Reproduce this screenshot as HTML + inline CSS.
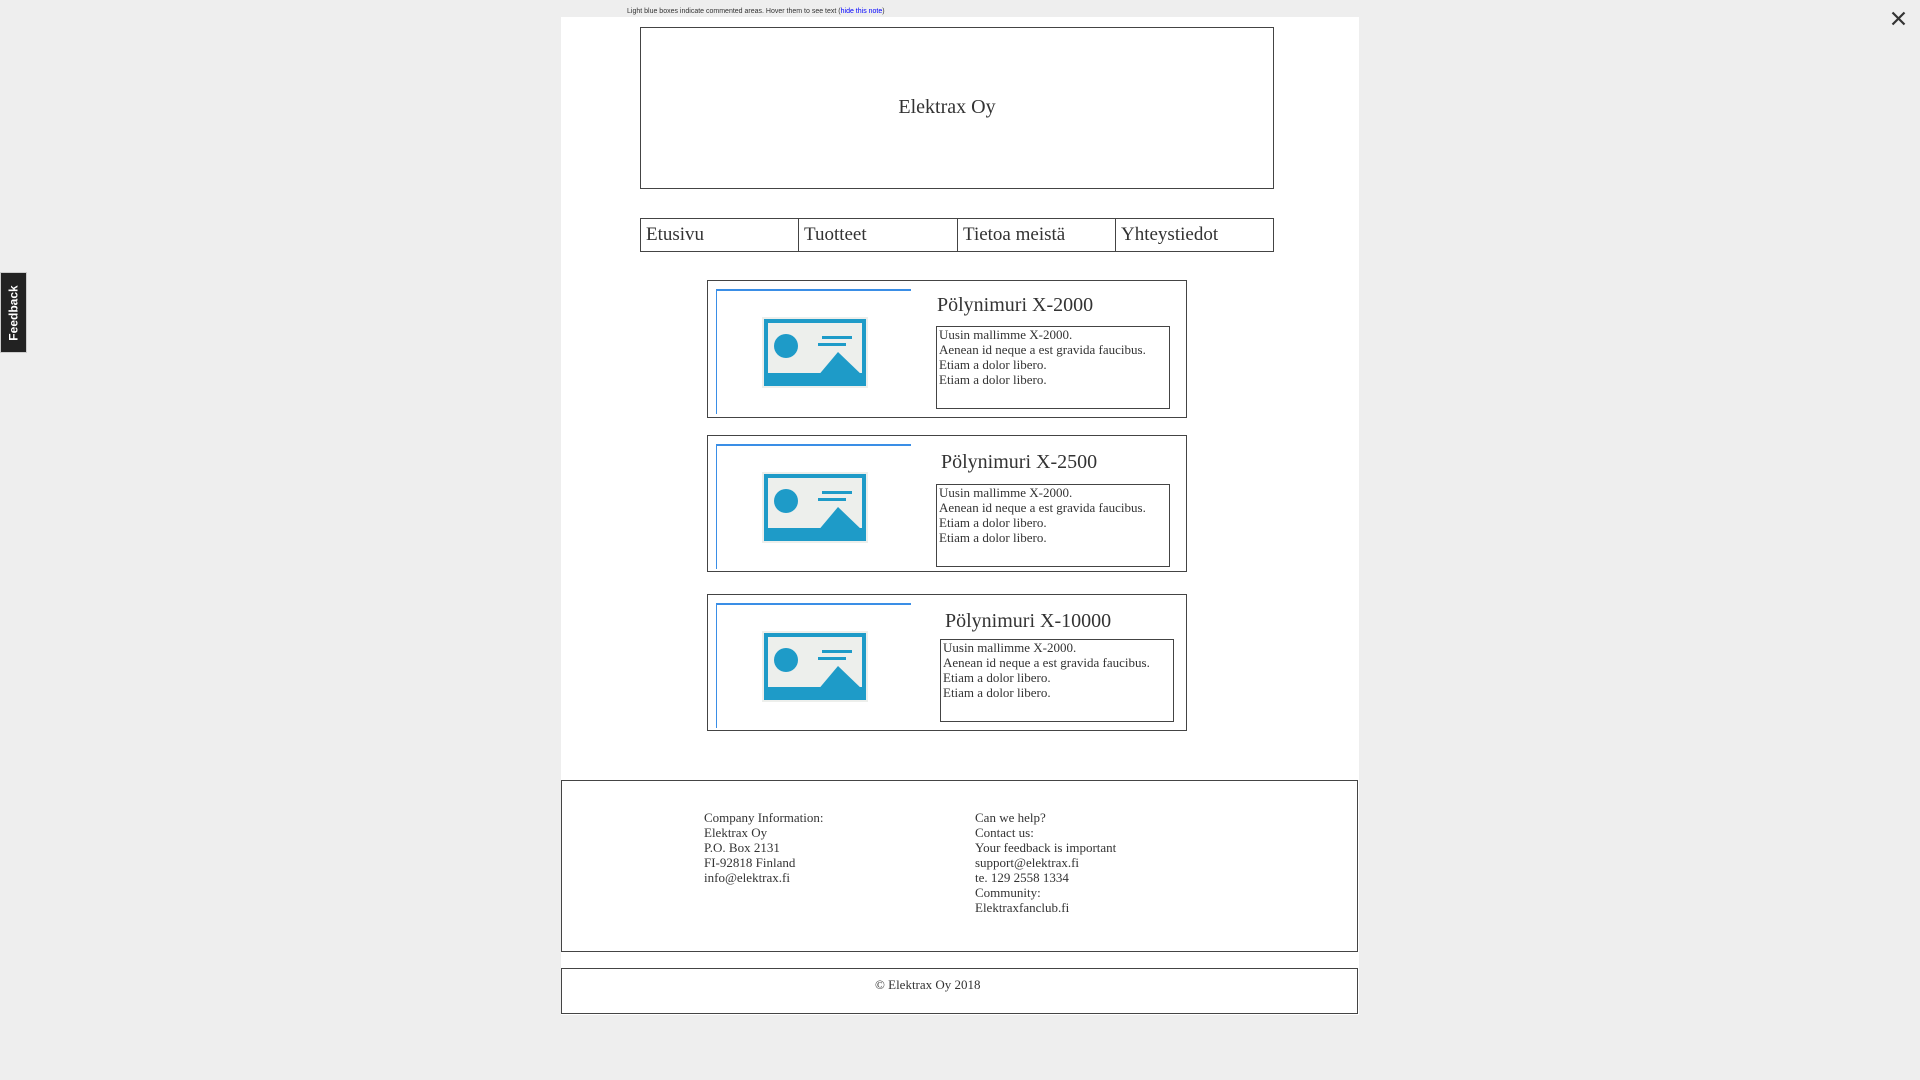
<!DOCTYPE html>
<html><head><meta charset="utf-8"><style>
*{margin:0;padding:0;box-sizing:border-box}
body{width:1920px;height:1080px;background:#eeeeee;position:relative;overflow:hidden;font-family:"Liberation Serif",serif;color:#333}
.a{position:absolute}
.bx{position:absolute;border:1.5px solid #444;background:#fff}
.note{left:627px;top:8px;font:7px "Liberation Sans",sans-serif;color:#333}
.note span{color:#00f}
.page{left:561px;top:17px;width:798px;height:998px;background:#fff}
.nav{position:absolute;top:218px;height:34px;border:1.5px solid #444;font-size:19px;padding:5px 0 0 5px;background:#fff}
.card .blue{position:absolute;left:8px;top:8px;width:195px;height:125px;border-left:1.5px solid #3a8ee6;border-top:2px solid #3a8ee6}
.card h2{position:absolute;font-weight:normal;font-size:20px;color:#333}
.desc{position:absolute;border:1.5px solid #444;font-size:13px;line-height:15px;padding:0 2px;width:234px;height:83px;white-space:nowrap}
.ft{font-size:13px;line-height:15px}
</style></head><body>
<div class="a page"></div>
<div class="a note">Light blue boxes indicate commented areas. Hover them to see text (<span>hide this note</span>)</div>
<div class="bx" style="left:640px;top:27px;width:634px;height:162px"></div>
<div class="a" style="left:640px;top:96px;width:614px;text-align:center;font-size:20px">Elektrax Oy</div>
<div class="nav" style="left:640px;width:159px">Etusivu</div>
<div class="nav" style="left:798px;width:160px">Tuotteet</div>
<div class="nav" style="left:957px;width:159px">Tietoa meistä</div>
<div class="nav" style="left:1115px;width:159px">Yhteystiedot</div>

<div class="bx card" style="left:707px;top:280px;width:480px;height:138px">
 <div class="blue"></div>
 <svg class="a" style="left:54px;top:36px" width="106" height="71" viewBox="0 0 106 71"><rect width="106" height="71" fill="#edefec"/><rect x="4" y="4" width="98" height="63" fill="none" stroke="#1e9bc8" stroke-width="4"/><rect x="4" y="56" width="98" height="11" fill="#1e9bc8"/><circle cx="24" cy="29" r="12" fill="#1e9bc8"/><path d="M55 60 L76 35 L102 60Z" fill="#1e9bc8"/><rect x="60" y="19" width="30" height="3" fill="#1e9bc8"/><rect x="56" y="26" width="28" height="3" fill="#1e9bc8"/></svg>
 <h2 style="left:229px;top:13px">Pölynimuri X-2000</h2>
 <div class="desc" style="left:228px;top:45px">Uusin mallimme X-2000.<br>Aenean id neque a est gravida faucibus.<br>Etiam a dolor libero.<br>Etiam a dolor libero.</div>
</div>
<div class="bx card" style="left:707px;top:435px;width:480px;height:137px">
 <div class="blue"></div>
 <svg class="a" style="left:54px;top:36px" width="106" height="71" viewBox="0 0 106 71"><rect width="106" height="71" fill="#edefec"/><rect x="4" y="4" width="98" height="63" fill="none" stroke="#1e9bc8" stroke-width="4"/><rect x="4" y="56" width="98" height="11" fill="#1e9bc8"/><circle cx="24" cy="29" r="12" fill="#1e9bc8"/><path d="M55 60 L76 35 L102 60Z" fill="#1e9bc8"/><rect x="60" y="19" width="30" height="3" fill="#1e9bc8"/><rect x="56" y="26" width="28" height="3" fill="#1e9bc8"/></svg>
 <h2 style="left:233px;top:15px">Pölynimuri X-2500</h2>
 <div class="desc" style="left:228px;top:48px">Uusin mallimme X-2000.<br>Aenean id neque a est gravida faucibus.<br>Etiam a dolor libero.<br>Etiam a dolor libero.</div>
</div>
<div class="bx card" style="left:707px;top:594px;width:480px;height:137px">
 <div class="blue"></div>
 <svg class="a" style="left:54px;top:36px" width="106" height="71" viewBox="0 0 106 71"><rect width="106" height="71" fill="#edefec"/><rect x="4" y="4" width="98" height="63" fill="none" stroke="#1e9bc8" stroke-width="4"/><rect x="4" y="56" width="98" height="11" fill="#1e9bc8"/><circle cx="24" cy="29" r="12" fill="#1e9bc8"/><path d="M55 60 L76 35 L102 60Z" fill="#1e9bc8"/><rect x="60" y="19" width="30" height="3" fill="#1e9bc8"/><rect x="56" y="26" width="28" height="3" fill="#1e9bc8"/></svg>
 <h2 style="left:237px;top:15px">Pölynimuri X-10000</h2>
 <div class="desc" style="left:232px;top:44px">Uusin mallimme X-2000.<br>Aenean id neque a est gravida faucibus.<br>Etiam a dolor libero.<br>Etiam a dolor libero.</div>
</div>

<div class="bx" style="left:561px;top:780px;width:797px;height:172px"></div>
<div class="a ft" style="left:704px;top:810px">Company Information:<br>Elektrax Oy<br>P.O. Box 2131<br>FI-92818 Finland<br>info@elektrax.fi</div>
<div class="a ft" style="left:975px;top:810px">Can we help?<br>Contact us:<br>Your feedback is important<br>support@elektrax.fi<br>te. 129 2558 1334<br>Community:<br>Elektraxfanclub.fi</div>
<div class="bx" style="left:561px;top:968px;width:797px;height:46px"></div>
<div class="a ft" style="left:875px;top:977px">© Elektrax Oy 2018</div>

<div class="a" style="left:0;top:272px;width:27px;height:81px;background:#222;border:1px solid #ccc;"></div>
<div class="a" style="left:-27px;top:303px;width:81px;height:20px;transform:rotate(-90deg);color:#fff;font:bold 12px 'Liberation Sans',sans-serif;text-align:center;line-height:20px">Feedback</div>
<svg class="a" style="left:1891px;top:11px" width="15" height="15" viewBox="0 0 15 15"><path d="M1.5 1.5L13.5 13.5M13.5 1.5L1.5 13.5" stroke="#333" stroke-width="2.2"/></svg>
</body></html>
